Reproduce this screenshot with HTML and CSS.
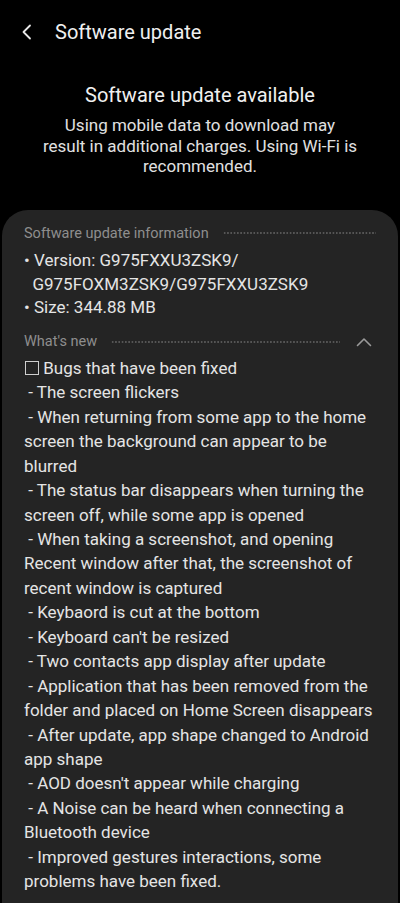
FILE: index.html
```html
<!DOCTYPE html>
<html lang="en">
<head>
    <meta charset="UTF-8">
    <meta name="viewport" content="width=device-width, initial-scale=1.0">
    <title>Software update</title>
    <link rel="stylesheet" href="styles.css">
</head>
<body>

    <div class="top-bar">
        <svg class="back" width="12" height="16" viewBox="0 0 12 16">
            <path d="M9 1.5 L2.5 8 L9 14.5" fill="none" stroke="#e8e8e8" stroke-width="1.8" stroke-linecap="round" stroke-linejoin="round"/>
        </svg>
        <span class="title">Software update</span>
    </div>

    <div class="intro">
        <h1>Software update available</h1>
        <p>Using mobile data to download may result in additional charges. Using Wi-Fi is recommended.</p>
    </div>

    <div class="card">
        <div class="section-head">
            <span>Software update information</span>
            <span class="dots"></span>
        </div>
        <div class="info">
            <div>&bull; Version: G975FXXU3ZSK9/<br>&nbsp;&nbsp;G975FOXM3ZSK9/G975FXXU3ZSK9</div>
            <div>&bull; Size: 344.88 MB</div>
        </div>

        <div class="section-head whats-new">
            <span>What's new</span>
            <span class="dots"></span>
            <svg class="arrow" width="16" height="10" viewBox="0 0 16 10">
                <path d="M1.5 8.5 L8 2 L14.5 8.5" fill="none" stroke="#9a9a9a" stroke-width="1.6" stroke-linecap="round" stroke-linejoin="round"/>
            </svg>
        </div>
        <div class="changes">
            <div><span class="box"></span> Bugs that have been fixed</div>
            <div>&nbsp;- The screen flickers</div>
            <div>&nbsp;- When returning from some app to the home screen the background can appear to be blurred</div>
            <div>&nbsp;- The status bar disappears when turning the screen off, while some app is opened</div>
            <div>&nbsp;- When taking a screenshot, and opening Recent window after that, the screenshot of recent window is captured</div>
            <div>&nbsp;- Keybaord is cut at the bottom</div>
            <div>&nbsp;- Keyboard can't be resized</div>
            <div>&nbsp;- Two contacts app display after update</div>
            <div>&nbsp;- Application that has been removed from the folder and placed on Home Screen disappears</div>
            <div>&nbsp;- After update, app shape changed to Android app shape</div>
            <div>&nbsp;- AOD doesn't appear while charging</div>
            <div>&nbsp;- A Noise can be heard when connecting a Bluetooth device</div>
            <div>&nbsp;- Improved gestures interactions, some problems have been fixed.</div>
        </div>
    </div>

</body>
</html>
```

FILE: styles.css
```css
body {
    font-family: Roboto, "Noto Sans", sans-serif;
    background-color: #000;
    color: #e8e8e8;
    margin: 0;
    padding: 0;
}
.top-bar {
    display: flex;
    align-items: center;
    height: 64px;
    padding-left: 21px;
}
.back {
    margin-right: 22px;
}
.title {
    font-size: 20px;
    color: #f0f0f0;
}
.intro {
    text-align: center;
    padding: 19px 42px 0;
    height: 127px;
}
.intro h1 {
    font-size: 20px;
    font-weight: normal;
    margin: 0 0 8px;
    color: #f0f0f0;
}
.intro p {
    font-size: 17px;
    line-height: 20.5px;
    margin: 0;
    color: #e0e0e0;
}
.card {
    background-color: #242424;
    margin: 0 2px;
    border-radius: 26px 26px 0 0;
    padding: 13px 22px 20px;
}
.section-head {
    display: flex;
    align-items: center;
    font-size: 14.5px;
    color: #8e8e8e;
    height: 20px;
}
.dots {
    flex: 1;
    height: 2px;
    margin-left: 14px;
    background-image: radial-gradient(circle, #555 0.8px, transparent 1px);
    background-size: 3.3px 2px;
}
.info {
    font-size: 17px;
    line-height: 23.6px;
    margin-top: 6px;
    color: #e4e4e4;
}
.whats-new {
    margin-top: 12px;
}
.arrow {
    margin-left: 16px;
    margin-right: 4px;
}
.changes {
    font-size: 17px;
    line-height: 24.45px;
    margin-top: 4px;
    color: #e4e4e4;
}
.box {
    display: inline-block;
    width: 12px;
    height: 12px;
    border: 1px solid #cfcfcf;
    margin-left: 1px;
    vertical-align: -1px;
}
```
